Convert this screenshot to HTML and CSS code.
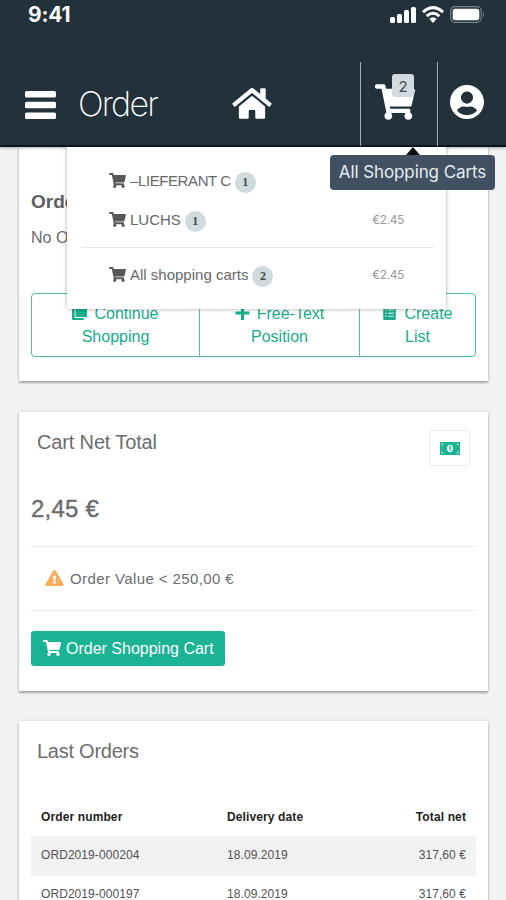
FILE: index.html
```html
<!DOCTYPE html>
<html lang="en">
<head>
<meta charset="utf-8">
<title>Order</title>
<link rel="stylesheet" href="styles.css">
</head>
<body>
<svg class="defs" width="0" height="0">
  <symbol id="cart" viewBox="0 0 576 512"><path d="M528.12 301.319l47.273-208C578.806 78.301 567.391 64 551.99 64H159.208l-9.166-44.81C147.758 8.021 137.93 0 126.529 0H24C10.745 0 0 10.745 0 24v16c0 13.255 10.745 24 24 24h69.883l70.248 343.435C147.325 417.1 136 435.222 136 456c0 30.928 25.072 56 56 56s56-25.072 56-56c0-15.674-6.447-29.835-16.824-40h209.647C430.447 426.165 424 440.326 424 456c0 30.928 25.072 56 56 56s56-25.072 56-56c0-22.172-12.888-41.332-31.579-50.405l5.517-24.276c3.413-15.018-8.002-29.319-23.403-29.319H218.117l-6.545-32h293.145c11.206 0 20.92-7.754 23.403-18.681z"/></symbol>
</svg>
<header class="header">
  <div class="status">
    <span class="time">9:41</span>
    <svg class="signal" viewBox="0 0 26 17"><rect x="0" y="11" width="5" height="6" rx="1.5"/><rect x="7" y="8" width="5" height="9" rx="1.5"/><rect x="14" y="4" width="5" height="13" rx="1.5"/><rect x="21" y="1" width="5" height="16" rx="1.5"/></svg>
    <svg class="wifi" viewBox="0 0 22 17"><g fill="none" stroke="#fff" stroke-width="3"><path d="M1 6.2Q11-3 21 6.2"/><path d="M4.7 10.2Q11 4.4 17.3 10.2"/></g><path d="M7.3 12.8Q11 9.8 14.7 12.8L11 17z"/></svg>
    <svg class="battery" viewBox="0 0 35 17"><rect x=".7" y=".7" width="30.6" height="15.6" rx="4.2" fill="none" stroke="#75838a" stroke-width="1.2"/><rect x="2.7" y="2.7" width="26.6" height="11.6" rx="2.4"/><path d="M33 5.5q2 3 0 6z" fill="#75838a"/></svg>
  </div>
  <nav class="nav">
    <svg class="bars" viewBox="0 0 31 28"><rect width="31" height="6.5" rx="1.5"/><rect y="10.8" width="31" height="6.5" rx="1.5"/><rect y="21.5" width="31" height="6.5" rx="1.5"/></svg>
    <span class="page-title">Order</span>
    <svg class="home" viewBox="0 0 576 512"><path d="M280.37 148.26L96 300.11V464a16 16 0 0 0 16 16l112.06-.29a16 16 0 0 0 15.92-16V368a16 16 0 0 1 16-16h64a16 16 0 0 1 16 16v95.64a16 16 0 0 0 16 16.05L464 480a16 16 0 0 0 16-16V300L295.67 148.26a12.19 12.19 0 0 0-15.3 0zM571.6 251.47L488 182.56V44.05a12 12 0 0 0-12-12h-56a12 12 0 0 0-12 12v72.61L318.47 43a48 48 0 0 0-61 0L4.34 251.47a12 12 0 0 0-1.6 16.9l25.5 31A12 12 0 0 0 45.15 301l235.22-193.74a12.19 12.19 0 0 1 15.3 0L530.9 301a12 12 0 0 0 16.9-1.6l25.5-31a12 12 0 0 0-1.7-16.93z"/></svg>
    <div class="cart-cell">
      <svg class="cart-big"><use href="#cart"/></svg>
      <span class="count">2</span>
    </div>
    <svg class="user" viewBox="0 8 496 496"><path d="M248 8C111 8 0 119 0 256s111 248 248 248 248-111 248-248S385 8 248 8zm0 96c48.600 0 88 39.400 88 88s-39.400 88-88 88-88-39.400-88-88 39.400-88 88-88zm0 344c-58.700 0-111.300-26.600-146.500-68.200 18.800-35.400 55.600-59.800 98.500-59.800 2.400 0 4.800.4 7.100 1.100 13 4.200 26.600 6.900 40.900 6.900 14.300 0 28-2.700 40.900-6.900 2.300-.7 4.700-1.100 7.100-1.100 42.900 0 79.700 24.400 98.500 59.800C359.300 421.400 306.700 448 248 448z"/></svg>
  </nav>
</header>

<div class="dropdown">
  <div class="entry"><svg><use href="#cart"/></svg><span class="name supplier">–LIEFERANT C</span><span class="badge">1</span></div>
  <div class="entry"><svg><use href="#cart"/></svg><span class="name">LUCHS</span><span class="badge">1</span><span class="price">€2.45</span></div>
  <div class="rule"></div>
  <div class="entry last"><svg><use href="#cart"/></svg><span class="name">All shopping carts</span><span class="badge">2</span><span class="price">€2.45</span></div>
</div>
<div class="tooltip">All Shopping Carts</div>

<main>
  <section class="card orders">
    <h3>Orders</h3>
    <p>No Orders</p>
    <div class="actions">
      <div class="action"><span><svg class="ic" viewBox="0 0 15 14"><path d="M4.500 0H14q1 0 1 1v9q0 1-1 1H4.500q-1 0-1-1V1q0-1 1-1z"/><path d="M2.600 2H1Q0 2 0 3v10q0 1 1 1h10q1 0 1-1v-1H4q-1.400 0-1.400-1.400z"/></svg>Continue</span><span>Shopping</span></div>
      <div class="action"><span><svg class="ic" viewBox="0 0 14 14"><path d="M5.500 0h3v5.500H14v3H8.500V14h-3V8.500H0v-3h5.500z"/></svg>Free-Text</span><span>Position</span></div>
      <div class="action"><span><svg class="ic" viewBox="0 0 14 14"><rect x=".7" width="12.600" height="14" rx="1.300"/><path d="M2.700 4h1.500m1.500 0h5.600M2.700 7.200h1.500m1.500 0h5.600M2.700 10.400h1.500m1.500 0h5.600" stroke="#a9e0d0" stroke-width="1.400"/></svg>Create</span><span>List</span></div>
    </div>
  </section>

  <section class="card total">
    <div class="head"><h2>Cart Net Total</h2><div class="money"><svg viewBox="0 0 20 13"><rect width="20" height="13" rx="1"/><ellipse cx="10" cy="6.500" rx="3" ry="3.800" fill="#e3f5f0"/><path d="M9.200 4.600h1v4" fill="none" stroke="#1ab394" stroke-width="1.100"/><path d="M1 3.200Q3 3.200 3 1M17 1q0 2.200 2 2.200M1 9.800q2 0 2 2.200M17 12q0-2.200 2-2.200" fill="none" stroke="#c8ebe1"/></svg></div></div>
    <div class="amount">2,45 €</div>
    <div class="warn"><svg viewBox="0 0 576 512"><path d="M569.517 440.013C587.975 472.007 564.806 512 527.94 512H48.054c-36.937 0-59.999-40.055-41.577-71.987L246.423 23.985c18.467-32.009 64.72-31.951 83.154 0l239.94 416.028zM288 354c-25.405 0-46 20.595-46 46s20.595 46 46 46 46-20.595 46-46-20.595-46-46-46zm-43.673-165.346l7.418 136c.347 6.364 5.609 11.346 11.982 11.346h48.546c6.373 0 11.635-4.982 11.982-11.346l7.418-136c.375-6.874-5.098-12.654-11.982-12.654h-63.383c-6.884 0-12.356 5.78-11.981 12.654z"/></svg><span>Order Value &lt; 250,00 €</span></div>
    <button class="order"><svg><use href="#cart"/></svg><span>Order Shopping Cart</span></button>
  </section>

  <section class="card recent">
    <h2>Last Orders</h2>
    <div class="row th"><span>Order number</span><span>Delivery date</span><span>Total net</span></div>
    <div class="row odd"><span>ORD2019-000204</span><span>18.09.2019</span><span>317,60 €</span></div>
    <div class="row"><span>ORD2019-000197</span><span>18.09.2019</span><span>317,60 €</span></div>
  </section>
</main>
</body>
</html>
```
FILE: styles.css
```css
* { box-sizing: border-box; }
html { overflow: hidden; }
body { margin: 0; height: 900px; overflow: hidden; position: relative; background: #f2f2f2; color: #6b6d6f; font-family: "Liberation Sans", Arial, sans-serif; }
h2, h3, p { margin: 0; font-weight: 400; }
svg { fill: currentColor; flex: none; }
.defs { position: absolute; }

.header { height: 147px; background: #23323a; color: #fff; border-bottom: 2px solid #08141a; box-shadow: 0 1px 3px rgba(0,0,0,.3); position: relative; }
.status { height: 62px; display: flex; align-items: flex-start; padding: 5px 21px 0 28px; }
.time { font: 700 21px/20px Inter, sans-serif; letter-spacing: -.2px; margin-right: auto; }
.signal { width: 26px; height: 17px; margin-top: 1px; }
.wifi { width: 22px; height: 17px; margin: 1px 6px 0; }
.battery { width: 35px; height: 17px; margin-top: 1px; }
.nav { height: 84px; display: flex; align-items: center; }
.bars { width: 31px; height: 28px; margin-left: 25px; margin-top: 1px; }
.page-title { width: 90px; margin-left: 22px; font: 200 34px/40px Inter, sans-serif; letter-spacing: -1.8px; }
.home { width: 40px; height: 35px; margin-left: 64px; margin-top: -2px; }
.cart-cell { width: 78px; height: 84px; margin-left: 88px; border: solid #a4adb0; border-width: 0 1.500px; position: relative; }
.cart-big { display: block; width: 40px; height: 36px; margin: 22px 0 0 14px; }
.count { position: absolute; left: 31px; top: 12px; width: 22px; height: 23px; border-radius: 3px; background: #d1dade; color: #3e4a50; font: 15px/25px Inter, sans-serif; text-align: center; }
.user { width: 34px; height: 34px; margin-left: 12px; margin-top: -5px; }

.dropdown { position: absolute; z-index: 3; left: 67px; top: 147px; width: 379px; height: 162px; padding: 15px 12px 0 14px; background: #fff; border-radius: 0 0 3px 3px; box-shadow: 0 0 4px rgba(0,0,0,.35); clip-path: inset(0 -6px -6px -6px); color: #67696b; }
.entry { height: 39px; display: flex; align-items: center; padding: 0 30px 0 28px; }
.entry svg { width: 17px; height: 15px; margin-right: 4px; margin-top: -3px; color: #555759; }
.name { font-size: 15px; margin-top: -2px; white-space: nowrap; }
.supplier { letter-spacing: -.4px; }
.badge { width: 21px; height: 21px; margin: 2px 0 0 4px; border-radius: 50%; background: #d1dade; color: #3e4a50; font: 700 12px/21px "Liberation Serif", serif; text-align: center; }
.price { margin-left: auto; margin-top: -2px; font: 12px Inter, sans-serif; letter-spacing: -.4px; color: #999; }
.rule { height: 1px; margin-top: 7px; background: #e7e7e7; }
.last { margin-top: 8px; }
.tooltip { position: absolute; z-index: 4; left: 330px; top: 155px; width: 165px; height: 35px; border-radius: 4px; background: #415161; color: #e6ebef; font: 17px/34px Inter, sans-serif; letter-spacing: -.1px; text-align: center; white-space: nowrap; }
.tooltip::before { content: ""; position: absolute; left: 76px; top: -8px; border: solid transparent; border-width: 0 7px 8px; border-bottom-color: #0b0e10; }

main { padding: 0 18px 0 19px; }
.card { background: #fff; box-shadow: 0 2px 2px rgba(0,0,0,.28), 0 0 4px rgba(0,0,0,.12); padding: 0 12px; overflow: hidden; }
.orders { height: 234px; padding-top: 43px; }
.orders h3 { font: 700 19px/23px "Liberation Sans", sans-serif; color: #5c5e60; }
.orders p { font-size: 16px; line-height: 23px; margin-top: 13px; }
.actions { display: flex; height: 64px; margin-top: 44px; border: 1px solid #4fc0a4; border-radius: 4px; color: #18ac8c; }
.action { display: flex; flex-direction: column; align-items: center; padding-top: 8px; font-size: 16px; line-height: 23px; width: 167px; }
.action + .action { border-left: 1px solid #4fc0a4; width: 160px; }
.action:last-child { flex: 1; width: auto; }
.ic { width: 15px; height: 14px; margin-right: 7px; vertical-align: -1px; }

.total { height: 279px; margin-top: 31px; padding-top: 18px; }
.head { display: flex; justify-content: space-between; padding: 0 6px; }
h2 { font-size: 20px; line-height: 24px; letter-spacing: -.15px; }
.money { width: 41px; height: 36px; border: 1px solid #e9ecec; border-radius: 3px; display: flex; align-items: center; justify-content: center; color: #1ab394; }
.money svg { width: 20px; height: 13px; }
.amount { font-size: 24px; line-height: 30px; margin-top: 28px; letter-spacing: .2px; -webkit-text-stroke: .4px; }
.warn { display: flex; align-items: center; height: 65px; margin-top: 22px; padding-left: 14px; border: solid #eaebeb; border-width: 1px 0; font-size: 15px; letter-spacing: .4px; }
.warn svg { width: 19px; height: 16px; margin-right: 6px; margin-top: -1px; color: #f8ac59; }
.order { display: flex; align-items: center; width: 194px; height: 35px; margin: 20px 0 0; padding: 0 12px; border: 0; border-radius: 3px; background: #1ab394; color: #fff; font: 16px "Liberation Sans", sans-serif; white-space: nowrap; }
.order svg { width: 18px; height: 16px; margin-right: 5px; margin-top: -1px; }

.recent { height: 200px; margin-top: 30px; padding-top: 18px; }
.recent h2 { padding-left: 6px; margin-bottom: 36px; letter-spacing: -.25px; }
.row { display: grid; grid-template-columns: 186px 1fr auto; padding: 0 10px; height: 37px; line-height: 36px; font-size: 12px; letter-spacing: .07px; color: #505254; }
.th { font-weight: 700; line-height: 37px; letter-spacing: .12px; color: #222; }
.odd { background: #f1f1f1; height: 40px; line-height: 39px; }
```
